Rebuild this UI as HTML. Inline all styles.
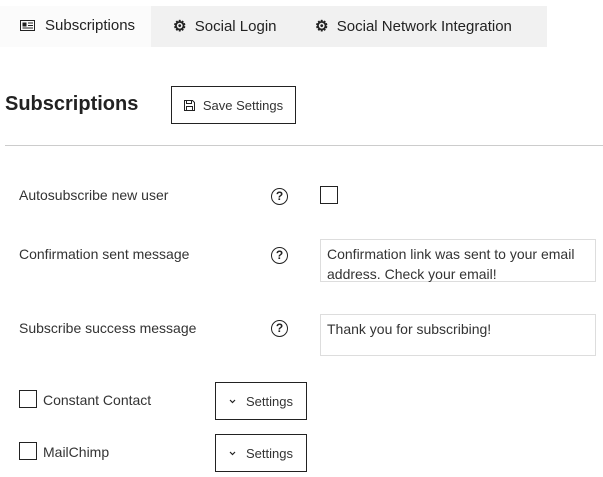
<!DOCTYPE html>
<html><head><style>
body{margin:0;width:603px;height:477px;background:#fff;font-family:"Liberation Sans",sans-serif;color:#333;position:relative;overflow:hidden}
.a{position:absolute}
.tabs{left:151px;top:6px;width:396px;height:41px;background:#f1f1f1}
.t{font-size:15px;top:16px;color:#222}
.btn{border:1px solid #222;box-sizing:border-box;font-size:13px;color:#333;display:flex;align-items:center;justify-content:center;background:#fff}
.lbl{font-size:14px;left:19px}
.q{width:17px;height:17px;border:1.5px solid #222;border-radius:50%;box-sizing:border-box;font-size:12px;font-weight:bold;text-align:center;line-height:15px;color:#222}
.cb{width:18px;height:18px;border:1px solid #222;box-sizing:border-box}
.ta{border:1px solid #ddd;box-sizing:border-box;font-size:14px;padding:4px 6px;line-height:20px;color:#333}
</style></head><body>
<div class="a" style="left:0;top:6px;width:151px;height:41px;background:#fbfbfb"></div>
<div class="a tabs"></div>
<div class="a t" style="left:20px;top:17px"><svg width="15" height="11" viewBox="0 0 15 11" style="vertical-align:-1px;margin-right:10px"><rect x="0.5" y="0.5" width="14" height="10" fill="none" stroke="#222"/><rect x="2.5" y="2.5" width="4" height="4" fill="#222"/><path d="M8 3h5M8 5.5h5M2.5 8h10.5" stroke="#222"/></svg>Subscriptions</div>
<div class="a t" style="left:173px;top:17px"><b>&#9881;</b>&nbsp; Social Login</div>
<div class="a t" style="left:315px;top:17px"><b>&#9881;</b>&nbsp; Social Network Integration</div>
<div class="a" style="left:5px;top:93px;font-size:20px;font-weight:bold;color:#222">Subscriptions</div>
<div class="a btn" style="left:171px;top:86px;width:125px;height:38px"><svg width="11" height="11" viewBox="0 0 11 11" style="margin-right:8px"><path d="M0.5 0.5h8l2 2v8h-10z" fill="none" stroke="#222"/><rect x="2.5" y="0.5" width="5" height="3" fill="none" stroke="#222"/><rect x="2.5" y="6.5" width="6" height="4" fill="none" stroke="#222"/></svg>Save Settings</div>
<div class="a" style="left:5px;top:145px;width:598px;height:1px;background:#ccc"></div>
<div class="a lbl" style="top:187px">Autosubscribe new user</div>
<div class="a q" style="left:271px;top:188px">?</div>
<div class="a cb" style="left:320px;top:186px"></div>
<div class="a lbl" style="top:246px">Confirmation sent message</div>
<div class="a q" style="left:271px;top:247px">?</div>
<div class="a ta" style="left:320px;top:239px;width:276px;height:43px">Confirmation link was sent to your email address. Check your email!</div>
<div class="a lbl" style="top:320px">Subscribe success message</div>
<div class="a q" style="left:271px;top:320px">?</div>
<div class="a ta" style="left:320px;top:314px;width:276px;height:42px">Thank you for subscribing!</div>
<div class="a cb" style="left:19px;top:390px"></div>
<div class="a" style="left:43px;top:392px;font-size:14px">Constant Contact</div>
<div class="a btn" style="left:215px;top:382px;width:92px;height:38px"><svg width="7" height="5" viewBox="0 0 7 5" style="margin-right:10px"><path d="M1 1l2.5 2.5L6 1" fill="none" stroke="#222" stroke-width="1.2"/></svg>Settings</div>
<div class="a cb" style="left:19px;top:442px"></div>
<div class="a" style="left:43px;top:444px;font-size:14px">MailChimp</div>
<div class="a btn" style="left:215px;top:434px;width:92px;height:38px"><svg width="7" height="5" viewBox="0 0 7 5" style="margin-right:10px"><path d="M1 1l2.5 2.5L6 1" fill="none" stroke="#222" stroke-width="1.2"/></svg>Settings</div>
</body></html>
